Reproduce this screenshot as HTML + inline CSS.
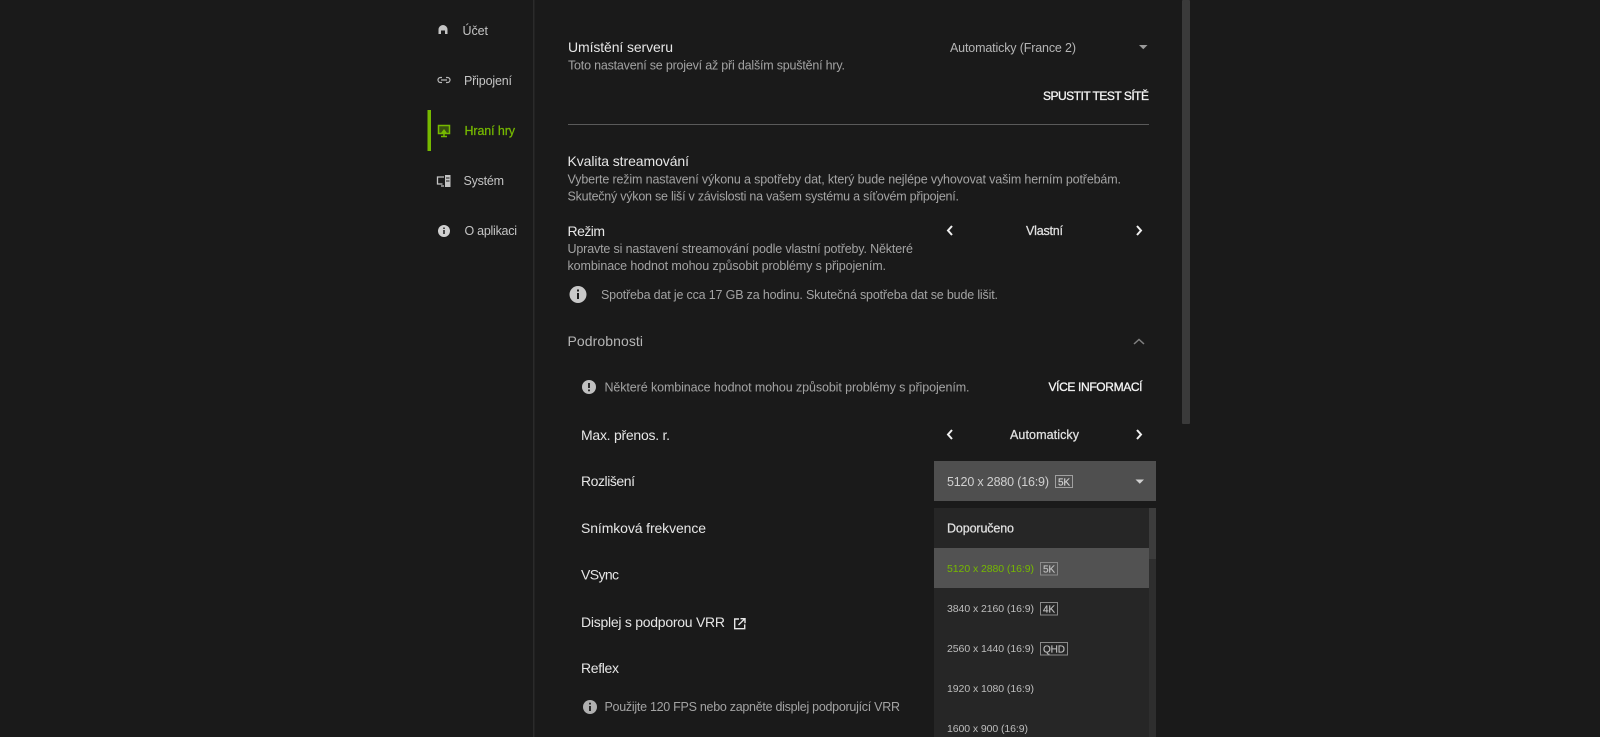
<!DOCTYPE html>
<html lang="cs"><head><meta charset="utf-8"><title>Nastavení</title>
<style>
html,body{margin:0;padding:0;background:#1a1a1a;width:1600px;height:737px;overflow:hidden}
svg{display:block}
text{font-family:"Liberation Sans",sans-serif;white-space:pre}
.nav{font-size:12.5px;fill:#c4c4c4}
.t{font-size:14px;fill:#e6e6e6}
.s{font-size:12.5px;fill:#a3a3a3}
.b{font-size:12px;fill:#f5f5f5;stroke:#f5f5f5;stroke-width:.3px}
.v{font-size:12.5px;fill:#e0e0e0;stroke:#e0e0e0;stroke-width:.25px}
.o{font-size:10.5px;fill:#bdbdbd}
.bd{font-size:10px;fill:#bdbdbd;stroke:#bdbdbd;stroke-width:.2px}
</style></head><body>
<svg width="1600" height="737" viewBox="0 0 1600 737" xmlns="http://www.w3.org/2000/svg">
<rect width="1600" height="737" fill="#1a1a1a"/>
<rect x="533" y="0" width="1.5" height="737" fill="#2b2b2b"/>
<rect x="1182" y="0" width="8" height="424" rx="1" fill="#3a3a3a"/>

<!-- sidebar -->
<rect x="427.5" y="110" width="3.5" height="41" fill="#76b900"/>
<path d="M438.5 34v-4.5a4.5 4.5 0 0 1 9 0v4.500h-2.500v-3.500h-4v3.500z" fill="#c4c4c4"/>
<text class="nav" x="462.500" y="35" textLength="25.500">Účet</text>
<g fill="none" stroke="#b8b8b8" stroke-width="1.2"><path d="M442 77.500h-1.500a2.500 2.500 0 0 0 0 5h1.500M446 77.500h1.500a2.500 2.500 0 0 1 0 5h-1.500M441 80h6"/></g>
<text class="nav" x="464" y="85" textLength="48">Připojení</text>
<rect x="438.500" y="125.500" width="11" height="8" fill="#76b900" fill-opacity=".35" stroke="#76b900" stroke-width="1.5"/>
<path d="M441 133l3-4 3 4z" fill="#76b900"/><path d="M444 134v2M441 136.500h6" stroke="#76b900" stroke-width="1.500"/>
<text class="nav" x="464.500" y="135" textLength="50.500" style="fill:#76b900;stroke:#76b900;stroke-width:.25px">Hraní hry</text>
<path d="M444 177h-6.500v7h5M441 186h3" fill="none" stroke="#c4c4c4" stroke-width="1.300"/>
<rect x="445" y="175" width="5.500" height="12" fill="#c4c4c4"/><path d="M446 178h3.500M446 181h3.500" stroke="#1a1a1a"/>
<text class="nav" x="463.500" y="185" textLength="40.500">Systém</text>
<circle cx="444" cy="231" r="6" fill="#d0d0d0"/><path d="M444 230v4M444 227.500v1.500" stroke="#1a1a1a" stroke-width="1.500"/>
<text class="nav" x="464.500" y="235" textLength="52.500">O aplikaci</text>

<!-- server -->
<text class="t" x="568" y="52" textLength="105">Umístění serveru</text>
<text class="s" x="568" y="69.500" textLength="277">Toto nastavení se projeví až při dalším spuštění hry.</text>
<text class="s" x="950" y="52" textLength="126" style="fill:#b5b5b5">Automaticky (France 2)</text>
<path d="M1139 45h8.500l-4.200 4.200z" fill="#9a9a9a"/>
<text class="b" x="1043" y="100" textLength="106">SPUSTIT TEST SÍTĚ</text>
<rect x="568" y="124" width="581" height="1" fill="#5a5a5a"/>

<!-- quality -->
<text class="t" x="567.500" y="166" textLength="121.500">Kvalita streamování</text>
<text class="s" x="567.500" y="183.500" textLength="553.500">Vyberte režim nastavení výkonu a spotřeby dat, který bude nejlépe vyhovovat vašim herním potřebám.</text>
<text class="s" x="567.500" y="200.500" textLength="391.500">Skutečný výkon se liší v závislosti na vašem systému a síťovém připojení.</text>
<text class="t" x="567.500" y="236" textLength="37.500">Režim</text>
<text class="s" x="567.500" y="253" textLength="345.500">Upravte si nastavení streamování podle vlastní potřeby. Některé</text>
<text class="s" x="567.500" y="270" textLength="318.500">kombinace hodnot mohou způsobit problémy s připojením.</text>
<text class="v" x="1026" y="235" textLength="37">Vlastní</text>
<path d="M952 226l-4 4.500 4 4.500M1137 226l4 4.500-4 4.500" fill="none" stroke="#f0f0f0" stroke-width="2"/>
<circle cx="578" cy="294.500" r="8.500" fill="#c8c8c8"/><path d="M578 293v6M578 289.500v2" stroke="#1a1a1a" stroke-width="2"/>
<text class="s" x="601" y="299" textLength="397">Spotřeba dat je cca 17 GB za hodinu. Skutečná spotřeba dat se bude lišit.</text>

<!-- details -->
<text class="t" x="567.500" y="346" textLength="75.500" style="fill:#b5b5b5">Podrobnosti</text>
<path d="M1134 344l5-4.500 5 4.500" fill="none" stroke="#808080" stroke-width="1.500"/>
<circle cx="589" cy="387" r="7" fill="#c0c0c0"/><path d="M589 383v5M589 389.500v1.800" stroke="#1a1a1a" stroke-width="1.800"/>
<text class="s" x="604.500" y="391.500" textLength="365">Některé kombinace hodnot mohou způsobit problémy s připojením.</text>
<text class="b" x="1048.500" y="391" textLength="94">VÍCE INFORMACÍ</text>

<text class="t" x="581" y="440" textLength="89">Max. přenos. r.</text>
<text class="v" x="1010" y="439" textLength="69">Automaticky</text>
<path d="M952 430l-4 4.500 4 4.500M1137 430l4 4.500-4 4.500" fill="none" stroke="#f0f0f0" stroke-width="2"/>

<text class="t" x="581" y="486" textLength="54">Rozlišení</text>
<text class="t" x="581" y="533" textLength="125">Snímková frekvence</text>
<text class="t" x="581" y="579.500" textLength="38">VSync</text>
<text class="t" x="581" y="627" textLength="144">Displej s podporou VRR</text>
<path d="M739 619h-4.300v9.700h10v-4.300" fill="none" stroke="#e6e6e6" stroke-width="1.400"/>
<path d="M738.500 625l6-6M740.500 618.700h4.500v4.500" fill="none" stroke="#e6e6e6" stroke-width="1.400"/>
<text class="t" x="581" y="673" textLength="38">Reflex</text>
<circle cx="590" cy="707" r="7" fill="#b0b0b0"/><path d="M590 706v5M590 702.700v1.800" stroke="#1a1a1a" stroke-width="1.800"/>
<text class="s" x="604.500" y="711" textLength="295.500">Použijte 120 FPS nebo zapněte displej podporující VRR</text>

<!-- select -->
<rect x="934" y="461" width="222" height="40" fill="#4f4f4f"/>
<text class="s" x="947" y="486" textLength="102" style="fill:#d0d0d0">5120 x 2880 (16:9)</text>
<rect x="1055.500" y="475.500" width="17" height="12" fill="none" stroke="#a0a0a0"/>
<text class="bd" x="1058" y="485.500" textLength="12" style="fill:#d0d0d0;stroke:#d0d0d0">5K</text>
<path d="M1135.500 479.500h8.500l-4.200 4.200z" fill="#d0d0d0"/>

<!-- list -->
<rect x="934" y="508" width="222" height="229" fill="#262626"/>
<rect x="1149" y="508" width="7" height="229" fill="#2e2e2e"/>
<rect x="1149" y="508" width="7" height="51" fill="#3c3c3c"/>
<rect x="934" y="548" width="215" height="40" fill="#525252"/>
<text class="v" x="947" y="532.500" textLength="67">Doporučeno</text>

<text class="o" x="947" y="572" textLength="87" style="fill:#76b900">5120 x 2880 (16:9)</text>
<rect x="1040.500" y="562.500" width="17" height="12.500" fill="none" stroke="#8a8a8a"/>
<text class="bd" x="1043" y="572.500" textLength="12">5K</text>

<text class="o" x="947" y="612" textLength="87">3840 x 2160 (16:9)</text>
<rect x="1040.500" y="602.500" width="17" height="12.500" fill="none" stroke="#8a8a8a"/>
<text class="bd" x="1043" y="612.500" textLength="12">4K</text>

<text class="o" x="947" y="652" textLength="87">2560 x 1440 (16:9)</text>
<rect x="1040.500" y="642.500" width="27" height="12.500" fill="none" stroke="#8a8a8a"/>
<text class="bd" x="1043" y="652.500" textLength="22">QHD</text>

<text class="o" x="947" y="692" textLength="87">1920 x 1080 (16:9)</text>
<text class="o" x="947" y="732" textLength="81">1600 x 900 (16:9)</text>
</svg>
</body></html>
